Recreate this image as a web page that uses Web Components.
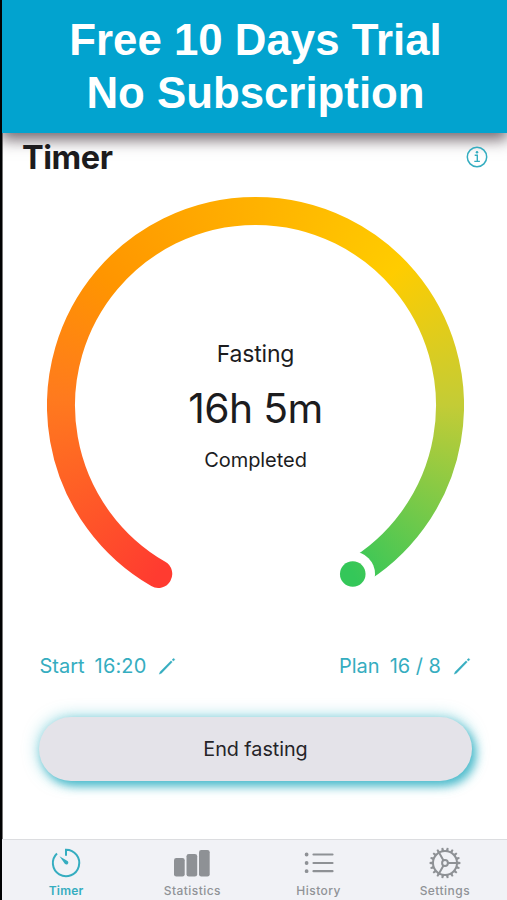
<!DOCTYPE html>
<html lang="en"><head><meta charset="utf-8"><title>Timer</title>
<style>body{margin:0;width:507px;height:900px;overflow:hidden;background:#fff}</style></head>
<body><fasting-app></fasting-app>
<script>
const define=(name,html)=>customElements.define(name,class extends HTMLElement{
  constructor(){super();this.attachShadow({mode:'open'}).innerHTML=html;}
});

define('promo-banner',`<style>
:host{display:block;box-sizing:border-box;height:133px;padding:14px 0 0 2px;background:#02a3cf;color:#fff;text-align:center;
font:bold 43.8px/52.5px "Liberation Sans",Arial,sans-serif;box-shadow:0 6px 14px 1px rgba(65,50,60,.72);position:relative;clip-path:inset(0 0 -30px 0)}
::slotted(div){white-space:nowrap}
</style><slot></slot>`);

define('page-header',`<style>
:host{display:flex;justify-content:space-between;align-items:center;height:48px;padding:0 19px 0 19px;position:relative}
h1{margin:0;font:700 32.5px/40px Inter,sans-serif;letter-spacing:-.45px;color:#1c1b1d;padding-top:1px}
svg{display:block}
</style><h1><slot></slot></h1>
<svg width="22" height="22" viewBox="0 0 22 22" fill="none" stroke="#35adc0"><circle cx="11" cy="11" r="9.7" stroke-width="1.5"/><path d="M8.7 9.2h2.6v6M8.3 15.4h5.6" stroke-width="1.4"/><circle cx="11" cy="6.2" r="1.25" fill="#35adc0" stroke="none"/></svg>`);

define('progress-ring',`<style>
:host{display:grid;width:417px;height:417px;margin:16px 0 0 44px}
.ring,.labels{grid-area:1/1}
.ring{width:417px;height:417px}
.fill{width:417px;height:417px;background:conic-gradient(from 210deg,#ff3b30 0deg,#ff7a1e 62deg,#ff9500 100deg,#ffcc00 196deg,#c3cc36 240deg,#34c759 300deg,#34c759 330deg,#ff3b30 331deg)}
.labels{display:flex;flex-direction:column;align-items:center;padding-top:141px;font-family:Inter,sans-serif;color:#1c1c1e}
</style>
<svg class="ring" viewBox="0 0 417 417"><defs><mask id="arc" maskUnits="userSpaceOnUse" x="0" y="0" width="417" height="417">
<path d="M111.25 376.95A194.5 194.5 0 1 1 305.75 376.95" fill="none" stroke="#fff" stroke-width="28" stroke-linecap="round"/>
<circle cx="305.75" cy="376.95" r="22.3" fill="#000"/><circle cx="305.75" cy="376.95" r="12.8" fill="#fff"/></mask></defs>
<foreignObject width="417" height="417" mask="url(#arc)"><div class="fill"></div></foreignObject></svg>
<div class="labels"><slot></slot></div>`);

define('edit-value',`<style>
:host{display:flex;align-items:center;font:400 20px/26px Inter,sans-serif;color:#35adc0;white-space:pre}
svg{display:block;margin-left:12px}
</style><slot></slot>
<svg width="18" height="18" viewBox="0 0 18 18"><path d="M1.2 17.2l.9-2.4L13 3.8l1.3 1.3L3.5 16.2zM14 2.8l1.3-1.2c.6-.5 1.8.6 1.3 1.3l-1.2 1.2z" fill="#35adc0" stroke="#35adc0" stroke-width=".3"/></svg>`);

define('action-button',`<style>
:host{display:block}
button{display:block;width:433px;height:64px;padding:0;border:0;border-radius:32px;background:#e4e3e9;color:#252428;
font:400 19.8px/65px Inter,sans-serif;letter-spacing:-.05px;box-shadow:0 0 16px rgba(42,174,193,.55),4px 5px 10px rgba(42,174,193,.75)}
</style><button><slot></slot></button>`);

define('tab-item',`<style>
:host{display:flex;flex-direction:column;align-items:center;flex:1;color:#909297;font:500 12px/16px Inter,sans-serif;letter-spacing:.45px}
:host([active]){color:#35adc0;font-weight:600;letter-spacing:.25px}
::slotted(svg){display:block;width:38px;height:34px;margin:6px 0 3px}
</style><slot name="icon"></slot><span><slot></slot></span>`);

define('tab-bar',`<style>
:host{display:flex;box-sizing:border-box;height:61px;padding-left:1px;margin-right:-1px;border-top:1px solid #dcdde0;background:#f1f2f6}
</style><slot></slot>`);

const teeth=Array.from({length:18},(_,i)=>`<path d="M17.6 5L18.1 1.6h1.8l.5 3.4z" transform="rotate(${i*20+10} 19 17)"/>`).join('');
define('fasting-app',`<style>
:host{display:flex;flex-direction:column;box-sizing:border-box;width:507px;height:900px;background:#fff;border-left:2px solid #010203;overflow:hidden}
main{flex:1;min-height:0;border-left:1px solid #777}
.state{font-size:23px;line-height:32px;letter-spacing:-.2px}
.time{font-size:40.8px;line-height:52px;margin-top:12px;letter-spacing:-.6px}
.done{font-size:20px;line-height:28px;margin-top:12px;letter-spacing:-.05px}
.row{display:flex;justify-content:space-between;margin:39px 36px 0 36.5px}
action-button{margin:37.5px 0 0 36px}
.gap{display:inline-block;width:10px}
</style>
<promo-banner><div>Free 10 Days Trial</div><div>No Subscription</div></promo-banner>
<main>
<page-header>Timer</page-header>
<progress-ring><div class="state">Fasting</div><div class="time">16h 5m</div><div class="done">Completed</div></progress-ring>
<div class="row"><edit-value><span>Start</span><span class="gap"></span><span style="letter-spacing:.15px">16:20</span></edit-value><edit-value><span>Plan</span><span class="gap"></span><span>16 / 8</span></edit-value></div>
<action-button>End fasting</action-button>
</main>
<tab-bar>
<tab-item active><svg slot="icon" viewBox="0 0 38 34" fill="none" stroke="#35adc0" stroke-width="2"><path d="M19 9.8V3.8A13.2 13.2 0 1 1 10 7.4"/><path d="M12.5 10.2l8 4.8c2.2 1.8-.5 5-2.7 2.8z" fill="#35adc0" stroke="none"/></svg>Timer</tab-item>
<tab-item><svg slot="icon" viewBox="0 0 38 34" fill="#8e9195"><rect x="1" y="12" width="10.7" height="18.5" rx="2.3"/><rect x="13.5" y="8" width="10.7" height="22.5" rx="2.3"/><rect x="26" y="4" width="10.7" height="26.5" rx="2.3"/></svg>Statistics</tab-item>
<tab-item><svg slot="icon" viewBox="0 0 38 34" fill="none" stroke="#8e9195" stroke-linecap="round"><path d="M13.5 8.5h19M13.5 17h19M13.5 25.2h19" stroke-width="2.2"/><path d="M6.6 8.5h.01M6.6 17h.01M6.6 25.2h.01" stroke-width="3.8"/></svg>History</tab-item>
<tab-item><svg slot="icon" viewBox="0 0 38 34" fill="none" stroke="#8e9195" stroke-width="2"><g fill="#8e9195" stroke="none">${teeth}</g><circle cx="19" cy="17" r="12"/><circle cx="19" cy="17" r="2.9"/><path d="M22 17h9M17.5 14.4L13 6.6M17.5 19.6L13 27.4"/></svg>Settings</tab-item>
</tab-bar>`);
</script></body></html>
